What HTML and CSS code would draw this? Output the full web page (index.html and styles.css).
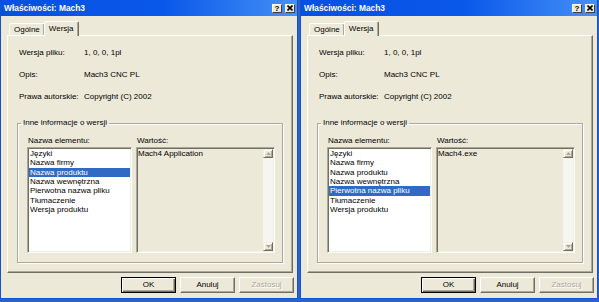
FILE: index.html
```html
<!DOCTYPE html>
<html lang="pl">

<head>
    <meta charset="UTF-8">
    <title>Właściwości: Mach3</title>
    <link rel="stylesheet" href="styles.css">
</head>

<body>
    <div class="desktop">

        <div class="dialog">
            <div class="titlebar">
                <span class="caption">Właściwości: Mach3</span>
                <span class="caption-btn">?</span>
                <span class="caption-btn close">
                    <svg width="6" height="6" viewBox="0 0 6 6"><path d="M0.5 0.5 L5.5 5.5 M5.5 0.5 L0.5 5.5" stroke="#000" stroke-width="1.6"/></svg>
                </span>
            </div>
            <div class="client">
                <div class="tabs">
                    <span class="tab">Ogólne</span>
                    <span class="tab active">Wersja</span>
                </div>
                <div class="panel">
                    <div class="props">
                        <div class="prop"><span class="key">Wersja pliku:</span><span>1, 0, 0, 1pl</span></div>
                        <div class="prop"><span class="key">Opis:</span><span>Mach3 CNC PL</span></div>
                        <div class="prop"><span class="key">Prawa autorskie:</span><span>Copyright (C) 2002</span></div>
                    </div>
                    <fieldset class="group">
                        <legend>Inne informacje o wersji</legend>
                        <div class="cols">
                            <div class="col">
                                <div class="col-label">Nazwa elementu:</div>
                                <ul class="list">
                                    <li>Języki</li>
                                    <li>Nazwa firmy</li>
                                    <li class="selected">Nazwa produktu</li>
                                    <li>Nazwa wewnętrzna</li>
                                    <li>Pierwotna nazwa pliku</li>
                                    <li>Tłumaczenie</li>
                                    <li>Wersja produktu</li>
                                </ul>
                            </div>
                            <div class="col">
                                <div class="col-label">Wartość:</div>
                                <div class="valuebox">
                                    <div class="value">Mach4 Application</div>
                                    <div class="scrollbar">
                                        <span class="scroll-btn"><svg width="5" height="3" viewBox="0 0 5 3"><path d="M2.5 0 L5 3 L0 3 Z" fill="#aca899"/></svg></span>
                                        <span class="scroll-btn"><svg width="5" height="3" viewBox="0 0 5 3"><path d="M0 0 L5 0 L2.5 3 Z" fill="#aca899"/></svg></span>
                                    </div>
                                </div>
                            </div>
                        </div>
                    </fieldset>
                </div>
                <div class="buttons">
                    <span class="btn default">OK</span>
                    <span class="btn">Anuluj</span>
                    <span class="btn disabled">Zastosuj</span>
                </div>
            </div>
        </div>

        <div class="dialog">
            <div class="titlebar">
                <span class="caption">Właściwości: Mach3</span>
                <span class="caption-btn">?</span>
                <span class="caption-btn close">
                    <svg width="6" height="6" viewBox="0 0 6 6"><path d="M0.5 0.5 L5.5 5.5 M5.5 0.5 L0.5 5.5" stroke="#000" stroke-width="1.6"/></svg>
                </span>
            </div>
            <div class="client">
                <div class="tabs">
                    <span class="tab">Ogólne</span>
                    <span class="tab active">Wersja</span>
                </div>
                <div class="panel">
                    <div class="props">
                        <div class="prop"><span class="key">Wersja pliku:</span><span>1, 0, 0, 1pl</span></div>
                        <div class="prop"><span class="key">Opis:</span><span>Mach3 CNC PL</span></div>
                        <div class="prop"><span class="key">Prawa autorskie:</span><span>Copyright (C) 2002</span></div>
                    </div>
                    <fieldset class="group">
                        <legend>Inne informacje o wersji</legend>
                        <div class="cols">
                            <div class="col">
                                <div class="col-label">Nazwa elementu:</div>
                                <ul class="list">
                                    <li>Języki</li>
                                    <li>Nazwa firmy</li>
                                    <li>Nazwa produktu</li>
                                    <li>Nazwa wewnętrzna</li>
                                    <li class="selected">Pierwotna nazwa pliku</li>
                                    <li>Tłumaczenie</li>
                                    <li>Wersja produktu</li>
                                </ul>
                            </div>
                            <div class="col">
                                <div class="col-label">Wartość:</div>
                                <div class="valuebox">
                                    <div class="value">Mach4.exe</div>
                                    <div class="scrollbar">
                                        <span class="scroll-btn"><svg width="5" height="3" viewBox="0 0 5 3"><path d="M2.5 0 L5 3 L0 3 Z" fill="#aca899"/></svg></span>
                                        <span class="scroll-btn"><svg width="5" height="3" viewBox="0 0 5 3"><path d="M0 0 L5 0 L2.5 3 Z" fill="#aca899"/></svg></span>
                                    </div>
                                </div>
                            </div>
                        </div>
                    </fieldset>
                </div>
                <div class="buttons">
                    <span class="btn default">OK</span>
                    <span class="btn">Anuluj</span>
                    <span class="btn disabled">Zastosuj</span>
                </div>
            </div>
        </div>

    </div>
</body>

</html>
```

FILE: styles.css
```css
* {
    margin: 0;
    padding: 0;
    box-sizing: border-box;
    font-family: "Liberation Sans", Arial, sans-serif;
}

body {
    width: 599px;
    height: 302px;
    overflow: hidden;
    background: #2b63c4;
    font-size: 8px;
    color: #000;
}

.desktop {
    display: flex;
    gap: 2px;
}

.dialog {
    width: 298px;
    height: 299px;
    background: #ece9d8;
    border: 1px solid #1550d8;
    border-top: none;
    display: flex;
    flex-direction: column;
}

/* title bar */
.titlebar {
    height: 16px;
    display: flex;
    align-items: center;
    padding: 0 2px 0 3px;
    background: linear-gradient(to right, #0650e2 0%, #0a58ea 55%, #4590f6 100%);
}

.caption {
    flex: 1;
    color: #fff;
    font-weight: bold;
    font-size: 8.4px;
}

.caption-btn {
    width: 10px;
    height: 9px;
    display: flex;
    align-items: center;
    justify-content: center;
    background: #ece9d8;
    border: 1px solid;
    border-color: #fff #404040 #404040 #fff;
    font-weight: bold;
    font-size: 8px;
    line-height: 7px;
}

.caption-btn.close {
    margin-left: 3px;
}

.client {
    flex: 1;
    display: flex;
    flex-direction: column;
    padding: 4px 4px 0 6px;
}

/* tabs */
.tabs {
    height: 15px;
    display: flex;
    align-items: flex-end;
    padding-left: 2px;
}

.tab {
    height: 12px;
    padding: 0 4px;
    line-height: 11px;
    border: 1px solid;
    border-bottom: none;
    border-color: #fff #716f64 transparent #fff;
    border-radius: 2px 2px 0 0;
    box-shadow: inset -1px 0 #aca899;
}

.tab.active {
    height: 15px;
    margin: 0 -2px -1px -1px;
    padding: 0 4px;
    line-height: 13px;
    background: #ece9d8;
    position: relative;
    z-index: 1;
}

.panel {
    height: 238px;
    border: 1px solid;
    border-color: #fff #716f64 #716f64 #fff;
    box-shadow: inset -1px -1px #aca899;
    padding: 5px 0 0 9px;
}

.props {
    padding-left: 2px;
}

.prop {
    display: flex;
    align-items: center;
    height: 22px;
}

.key {
    width: 65px;
}

/* group box */
.group {
    width: 266px;
    margin-top: 11px;
    border: 1px solid #aca899;
    box-shadow: inset 1px 1px #fff, 1px 1px #fff;
    padding: 8px 7px 9px 9px;
}

.group legend {
    margin-left: -6px;
    padding: 0 2px;
    line-height: 10px;
}

.cols {
    display: flex;
    gap: 4px;
}

.col-label {
    line-height: 10px;
    padding-left: 1px;
    margin-bottom: 1px;
}

.list {
    width: 105px;
    height: 106px;
    list-style: none;
    background: #fff;
    border: 1px solid;
    border-color: #aca899 #fff #fff #aca899;
    box-shadow: inset 1px 1px #716f64, inset -1px -1px #f1efe2;
    padding: 1px;
}

.list li {
    line-height: 9.33px;
    padding-left: 1px;
    white-space: nowrap;
}

.list li.selected {
    background: #316ac5;
    color: #fff;
}

.valuebox {
    width: 139px;
    height: 106px;
    display: flex;
    background: #ece9d8;
    border: 1px solid;
    border-color: #aca899 #fff #fff #aca899;
    box-shadow: inset 1px 1px #716f64, inset -1px -1px #f1efe2;
    padding: 1px;
}

.value {
    flex: 1;
    line-height: 9.33px;
}

.scrollbar {
    width: 10px;
    display: flex;
    flex-direction: column;
    justify-content: space-between;
    background: #f6f5ef;
}

.scroll-btn {
    height: 9px;
    display: flex;
    align-items: center;
    justify-content: center;
    background: #ece9d8;
    border: 1px solid;
    border-color: #f1efe2 #716f64 #716f64 #f1efe2;
    box-shadow: inset 1px 1px #fff, inset -1px -1px #aca899;
}

/* bottom buttons */
.buttons {
    display: flex;
    justify-content: flex-end;
    gap: 4px;
    margin: 4px -1px 0 0;
}

.btn {
    width: 55px;
    height: 16px;
    line-height: 14px;
    text-align: center;
    background: #ece9d8;
    border: 1px solid;
    border-color: #fff #716f64 #716f64 #fff;
    box-shadow: inset -1px -1px #aca899;
}

.btn.default {
    border-color: #000;
    box-shadow: inset 1px 1px #fff, inset -1px -1px #716f64, inset -2px -2px #aca899;
}

.btn.disabled {
    color: #aca899;
    text-shadow: 1px 1px #fff;
}
```
